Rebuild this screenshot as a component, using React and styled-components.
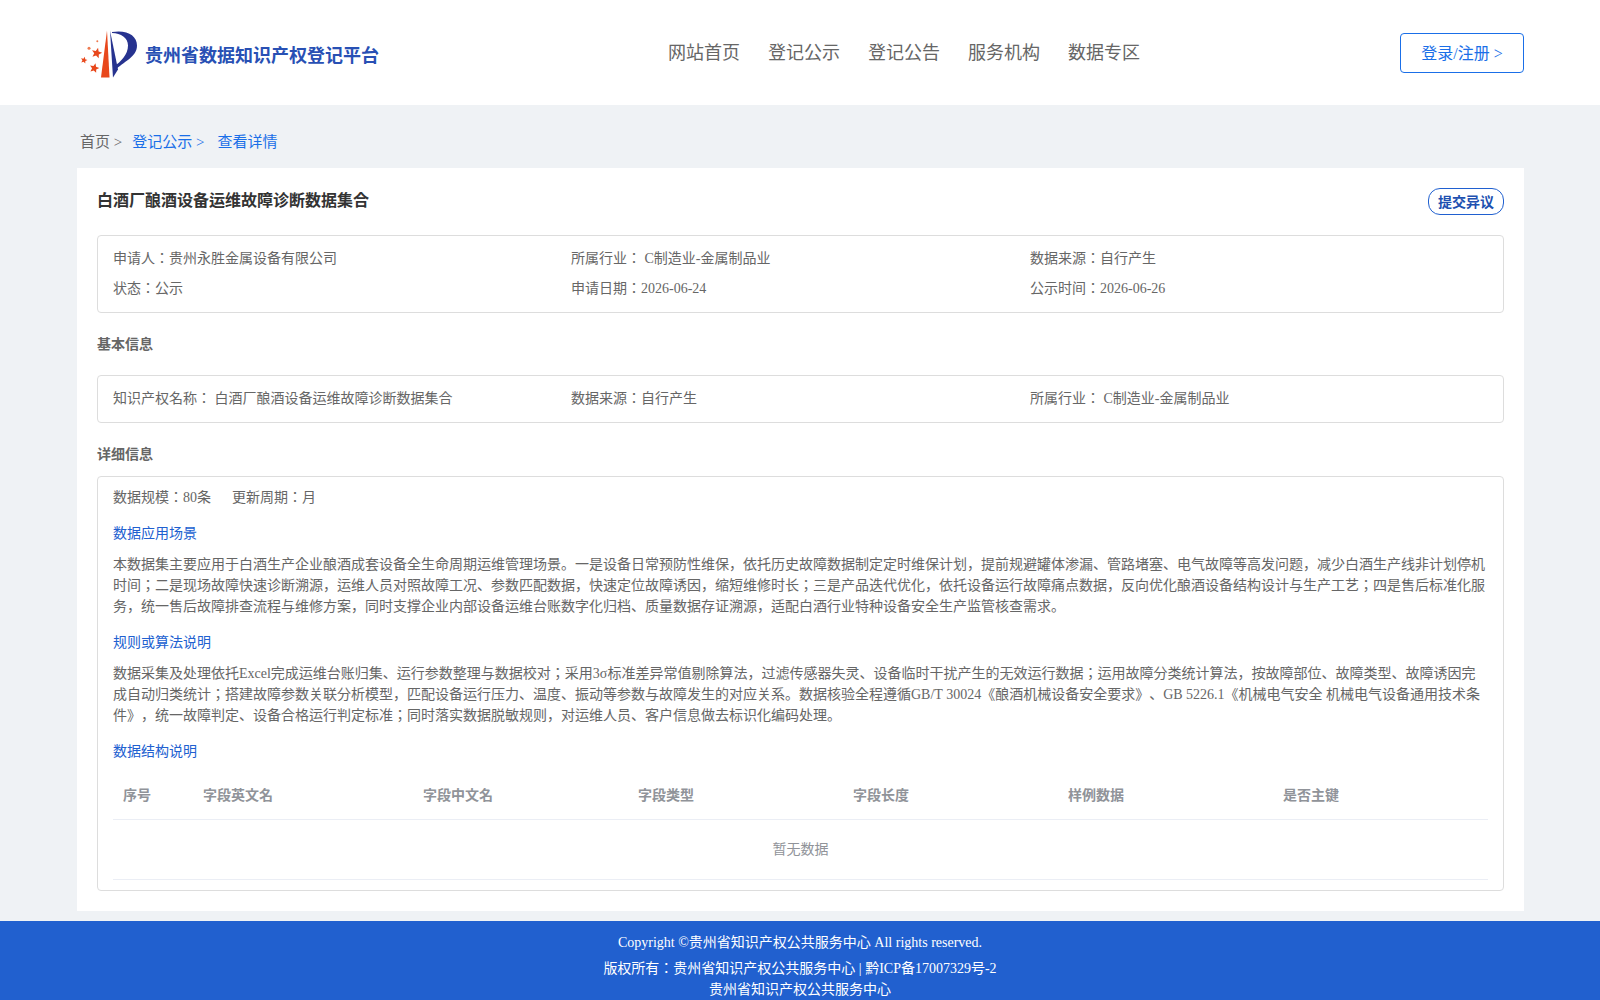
import React from "react"
import styled, { createGlobalStyle } from "styled-components"

const GlobalStyle = createGlobalStyle`
  html, body {
    margin: 0;
    padding: 0;
    background: #eff2f5;
  }
  body {
    font-family: "Liberation Serif", "Noto Sans CJK JP", serif;
    font-size: 14px;
    color: #666;
    text-spacing-trim: space-all;
  }
  * {
    box-sizing: border-box;
  }
`

const Page = styled.div`
  width: 1600px;
  height: 1000px;
  overflow: hidden;
  display: flex;
  flex-direction: column;
`

const Header = styled.header`
  height: 105px;
  flex: none;
  background: #fff;
  padding: 0 76px 0 77px;
  display: flex;
  align-items: flex-start;
`

const Brand = styled.div`
  width: 480px;
  flex: none;
  height: 105px;
  display: flex;
  align-items: center;
  padding-left: 3px;
`

const BrandName = styled.span`
  margin-left: 5px;
  margin-top: 3px;
  font-size: 18px;
  font-weight: 700;
  color: #2850b4;
  white-space: nowrap;
`

const Nav = styled.nav`
  display: flex;
  gap: 28px;
  margin-left: 111px;
  margin-top: 40px;
`

const NavItem = styled.a`
  font-size: 18px;
  line-height: 26px;
  color: #666;
`

const LoginButton = styled.a`
  margin-left: auto;
  margin-top: 33px;
  width: 124px;
  height: 40px;
  padding-bottom: 2px;
  border: 1px solid #1a6fe8;
  border-radius: 4px;
  display: flex;
  align-items: center;
  justify-content: center;
  font-size: 16px;
  color: #1a6fe8;
`

const Crumbs = styled.div`
  flex: none;
  height: 63px;
  padding: 28px 80px 0;
  display: flex;
  font-size: 15px;
  line-height: 18px;
`

const Crumb = styled.span`
  color: ${props => (props.active ? "#1a6fe8" : "#666")};
  margin-right: ${props => props.gap}px;
`

const Card = styled.main`
  flex: none;
  margin: 0 76px 0 77px;
  height: 743px;
  background: #fff;
  padding: 20px 20px 0;
`

const TitleRow = styled.div`
  display: flex;
  justify-content: space-between;
  align-items: flex-start;
  height: 47px;
`

const Title = styled.h1`
  margin: 0;
  font-size: 16px;
  line-height: 26px;
  font-weight: 700;
  color: #333;
`

const ObjectionButton = styled.a`
  width: 76px;
  height: 27px;
  padding-bottom: 2px;
  border: 1px solid #2060d0;
  border-radius: 12px;
  display: flex;
  align-items: center;
  justify-content: center;
  font-size: 14px;
  font-weight: 700;
  color: #2050b0;
`

const InfoBox = styled.div`
  border: 1px solid #ddd;
  border-radius: 4px;
  padding: 8px 15px;
`

const InfoGrid = styled.div`
  display: grid;
  grid-template-columns: 458px 459px 1fr;
`

const InfoCell = styled.div`
  height: 30px;
  line-height: 30px;
  white-space: pre;
`

const SectionTitle = styled.h2`
  margin: 0;
  height: ${props => props.h}px;
  padding-top: 22px;
  font-size: 14px;
  line-height: 20px;
  font-weight: 700;
  color: #666;
`

const DetailBox = styled(InfoBox)`
  height: 415px;
  padding: 8px 15px 0;
`

const Stats = styled.div`
  display: flex;
  gap: 21px;
  line-height: 26px;
`

const SubTitle = styled.h3`
  margin: ${props => props.top}px 0 0;
  font-size: 14px;
  line-height: 20px;
  font-weight: 400;
  color: #2060d0;
`

const Paragraph = styled.p`
  margin: ${props => props.top}px 0 0;
  line-height: 21px;
  color: #666;
`

const Table = styled.div`
  margin-top: 7px;
`

const TableHead = styled.div`
  display: grid;
  grid-template-columns: 80px 220px 215px 215px 215px 215px 1fr;
  height: 51px;
  border-bottom: 1px solid #ebeef5;
  align-items: center;
`

const HeadCell = styled.div`
  padding-left: 10px;
  font-weight: 700;
  color: #909399;
`

const EmptyRow = styled.div`
  height: 60px;
  padding-bottom: 3px;
  border-bottom: 1px solid #ebeef5;
  display: flex;
  align-items: center;
  justify-content: center;
  color: #909399;
`

const Footer = styled.footer`
  margin-top: 10px;
  flex: 1;
  background: #2160cf;
  color: #fff;
  text-align: center;
  padding-top: 11px;
  line-height: 21px;
`

const FooterLine = styled.div`
  margin-top: ${props => props.top || 0}px;
`

// five point star around a centre, for the logo
const starPoints = (cx, cy, r) => {
  const points = []
  for (let i = 0; i < 10; i++) {
    const radius = i % 2 === 0 ? r : r * 0.45
    const angle = -Math.PI / 2 + 0.25 + (i * Math.PI) / 5
    points.push(`${cx + radius * Math.cos(angle)},${cy + radius * Math.sin(angle)}`)
  }
  return points.join(" ")
}

const Logo = () => (
  <svg width="60" height="52" viewBox="0 -1.500 60 52">
    <path d="M27 2 L21 49 L29.500 49 Z" fill="#e8481c" />
    <path d="M30 2 L33 49 L38 41 Z" fill="#27338f" />
    <path d="M32 3.500 C47 1 57 7 57 17 C57 29 43 33 35 42 L34 38 C41 33 48 26 48 17 C48 9 41 5 32 4.500 Z" fill="#27338f" />
    <polygon points={starPoints(16.700, 24.700, 5.500)} fill="#e8481c" />
    <polygon points={starPoints(4, 31.700, 3.500)} fill="#e8481c" />
    <polygon points={starPoints(14.300, 39.700, 5)} fill="#e8481c" />
    <circle cx="9" cy="19.700" r="1.500" fill="#ee7a50" />
    <circle cx="17.300" cy="12.700" r="1" fill="#ee7a50" />
  </svg>
)

const fields = ["序号", "字段英文名", "字段中文名", "字段类型", "字段长度", "样例数据", "是否主键"]

export default function App() {
  return (
    <Page>
      <GlobalStyle />
      <Header>
        <Brand>
          <Logo />
          <BrandName>贵州省数据知识产权登记平台</BrandName>
        </Brand>
        <Nav>
          <NavItem>网站首页</NavItem>
          <NavItem>登记公示</NavItem>
          <NavItem>登记公告</NavItem>
          <NavItem>服务机构</NavItem>
          <NavItem>数据专区</NavItem>
        </Nav>
        <LoginButton>登录/注册 &gt;</LoginButton>
      </Header>
      <Crumbs>
        <Crumb gap={10}>首页 &gt;</Crumb>
        <Crumb active gap={13}>登记公示 &gt;</Crumb>
        <Crumb active>查看详情</Crumb>
      </Crumbs>
      <Card>
        <TitleRow>
          <Title>白酒厂酿酒设备运维故障诊断数据集合</Title>
          <ObjectionButton>提交异议</ObjectionButton>
        </TitleRow>
        <InfoBox>
          <InfoGrid>
            <InfoCell>申请人：贵州永胜金属设备有限公司</InfoCell>
            <InfoCell>所属行业： C制造业-金属制品业</InfoCell>
            <InfoCell>数据来源：自行产生</InfoCell>
            <InfoCell>状态：公示</InfoCell>
            <InfoCell>申请日期：2026-06-24</InfoCell>
            <InfoCell>公示时间：2026-06-26</InfoCell>
          </InfoGrid>
        </InfoBox>
        <SectionTitle h={62}>基本信息</SectionTitle>
        <InfoBox>
          <InfoGrid>
            <InfoCell>知识产权名称： 白酒厂酿酒设备运维故障诊断数据集合</InfoCell>
            <InfoCell>数据来源：自行产生</InfoCell>
            <InfoCell>所属行业： C制造业-金属制品业</InfoCell>
          </InfoGrid>
        </InfoBox>
        <SectionTitle h={53}>详细信息</SectionTitle>
        <DetailBox>
          <Stats>
            <span>数据规模：80条</span>
            <span>更新周期：月</span>
          </Stats>
          <SubTitle top={13}>数据应用场景</SubTitle>
          <Paragraph top={10}>
            本数据集主要应用于白酒生产企业酿酒成套设备全生命周期运维管理场景。一是设备日常预防性维保，依托历史故障数据制定定时维保计划，提前规避罐体渗漏、管路堵塞、电气故障等高发问题，减少白酒生产线非计划停机时间；二是现场故障快速诊断溯源，运维人员对照故障工况、参数匹配数据，快速定位故障诱因，缩短维修时长；三是产品迭代优化，依托设备运行故障痛点数据，反向优化酿酒设备结构设计与生产工艺；四是售后标准化服务，统一售后故障排查流程与维修方案，同时支撑企业内部设备运维台账数字化归档、质量数据存证溯源，适配白酒行业特种设备安全生产监管核查需求。
          </Paragraph>
          <SubTitle top={16}>规则或算法说明</SubTitle>
          <Paragraph top={10}>
            数据采集及处理依托Excel完成运维台账归集、运行参数整理与数据校对；采用3σ标准差异常值剔除算法，过滤传感器失灵、设备临时干扰产生的无效运行数据；运用故障分类统计算法，按故障部位、故障类型、故障诱因完成自动归类统计；搭建故障参数关联分析模型，匹配设备运行压力、温度、振动等参数与故障发生的对应关系。数据核验全程遵循GB/T 30024《酿酒机械设备安全要求》、GB 5226.1《机械电气安全 机械电气设备通用技术条件》，统一故障判定、设备合格运行判定标准；同时落实数据脱敏规则，对运维人员、客户信息做去标识化编码处理。
          </Paragraph>
          <SubTitle top={16}>数据结构说明</SubTitle>
          <Table>
            <TableHead>
              {fields.map(name => (
                <HeadCell key={name}>{name}</HeadCell>
              ))}
            </TableHead>
            <EmptyRow>暂无数据</EmptyRow>
          </Table>
        </DetailBox>
      </Card>
      <Footer>
        Copyright ©贵州省知识产权公共服务中心 All rights reserved.
        <FooterLine top={5}>版权所有：贵州省知识产权公共服务中心 | 黔ICP备17007329号-2</FooterLine>
        <FooterLine>贵州省知识产权公共服务中心</FooterLine>
      </Footer>
    </Page>
  )
}
